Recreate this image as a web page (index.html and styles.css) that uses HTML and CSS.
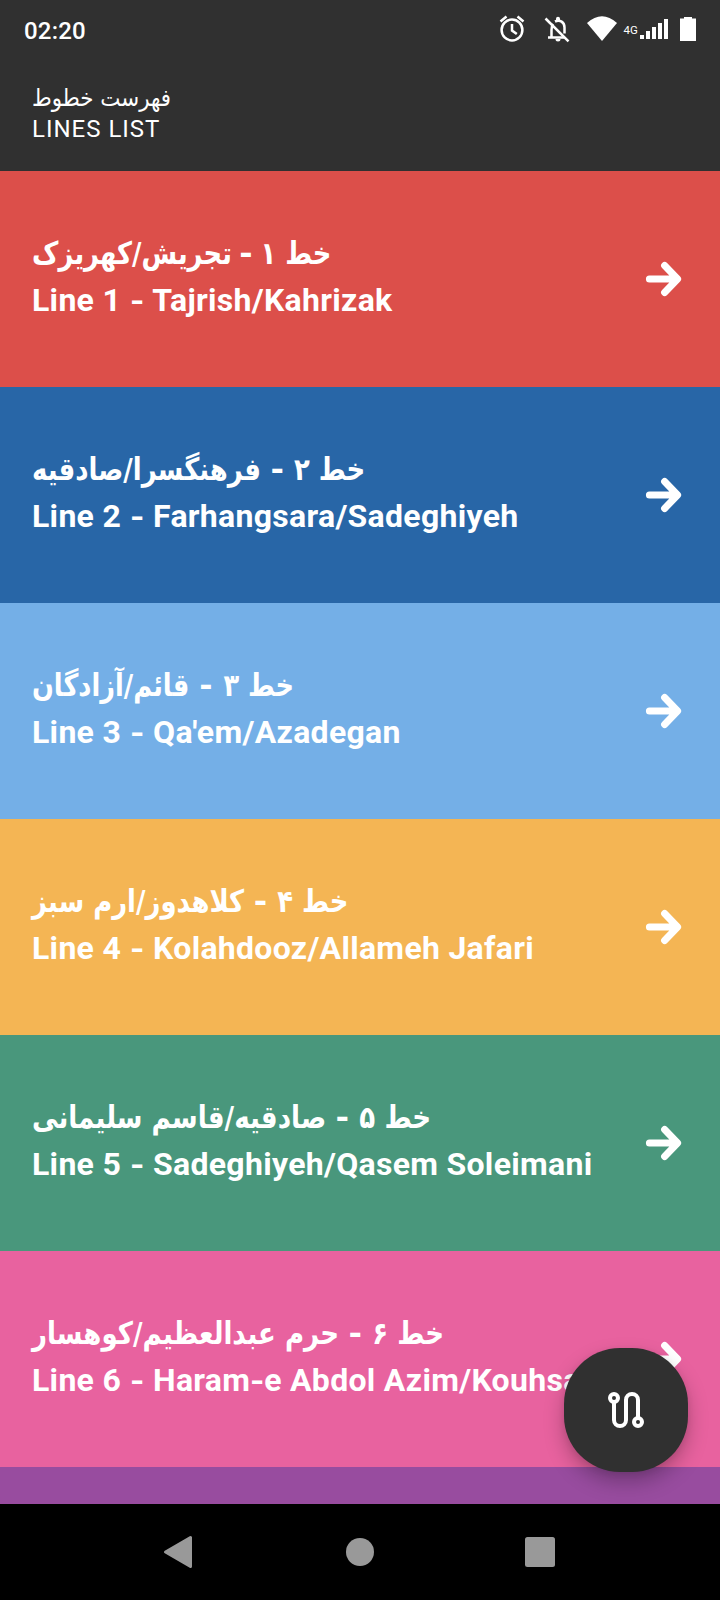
FILE: index.html
```html
<!DOCTYPE html>
<html lang="en">
<head>
<meta charset="utf-8">
<title>Lines List</title>
<link rel="stylesheet" href="styles.css">
</head>
<body>
<svg class="defs" width="0" height="0"><symbol id="arrow" viewBox="0 0 36 36"><path d="M3.4 18H31M18.6 4.5 31.6 18 18.6 31.5" fill="none" stroke="#fff" stroke-width="7" stroke-linecap="round" stroke-linejoin="round"/></symbol></svg>
<div class="screen">
  <header class="header">
    <div class="status">
      <span class="time">02:20</span>
      <svg class="status-icons" viewBox="0 0 240 60">
        <g fill="none" stroke="#fff" stroke-width="2.5">
          <circle cx="32" cy="30" r="10.4"/>
          <path d="M32 24v6.5l4.800 3.600M20.500 21.500l6-5M43.500 21.500l-6-5"/>
          <path d="M71.500 37.500V30c0-2.500.5-4.500 1.500-6M68 37.500h16M75 21.500c5-2.400 9.500.8 9.500 6v6"/>
          <path d="M65.500 18.500 88.500 41.300"/>
        </g>
        <g fill="#fff">
          <path d="M76 20v-1.200a2 2 0 0 1 4 0V20l-2 1zM75.500 39h5a2.500 2.500 0 0 1-5 0z"/>
          <path d="M107 23Q122 9.500 137 23L122 41z"/>
          <path d="M160 35h4v4h-4zM166 31h4v8h-4zM172 27h4v12h-4zM178 23h4v16h-4zM184 19h4v20h-4z"/>
          <path d="M200 18.500h4V17h8v1.500h4V41h-16z"/>
          <text class="network" x="143.500" y="34">4G</text>
        </g>
      </svg>
    </div>
    <div class="title-fa"><span>فهرست خطوط</span></div>
    <div class="title-en">LINES LIST</div>
  </header>
  <main class="lines">
    <a class="line red"><div class="names"><div class="fa"><span class="f1">خط ۱ <i>-</i> تجریش/کهریزک</span></div><div class="en">Line 1 <i>-</i> Tajrish/Kahrizak</div></div><svg class="arrow"><use href="#arrow"/></svg></a>
    <a class="line blue"><div class="names"><div class="fa"><span>خط ۲ <i>-</i> فرهنگسرا/صادقیه</span></div><div class="en">Line 2 <i>-</i> Farhangsara/Sadeghiyeh</div></div><svg class="arrow"><use href="#arrow"/></svg></a>
    <a class="line sky"><div class="names"><div class="fa"><span class="f3">خط ۳ <i>-</i> قائم/آزادگان</span></div><div class="en">Line 3 <i>-</i> Qa'em/Azadegan</div></div><svg class="arrow"><use href="#arrow"/></svg></a>
    <a class="line yellow"><div class="names"><div class="fa"><span>خط ۴ <i>-</i> کلاهدوز/ارم سبز</span></div><div class="en">Line 4 <i>-</i> Kolahdooz/Allameh Jafari</div></div><svg class="arrow"><use href="#arrow"/></svg></a>
    <a class="line green"><div class="names"><div class="fa"><span class="f5">خط ۵ <i>-</i> صادقیه/قاسم سلیمانی</span></div><div class="en">Line 5 <i>-</i> Sadeghiyeh/Qasem Soleimani</div></div><svg class="arrow"><use href="#arrow"/></svg></a>
    <a class="line pink"><div class="names"><div class="fa"><span class="f6">خط ۶ <i>-</i> حرم عبدالعظیم/کوهسار</span></div><div class="en">Line 6 <i>-</i> Haram<i class="tight">-</i>e Abdol Azim/Kouhsar</div></div><svg class="arrow"><use href="#arrow"/></svg></a>
    <a class="line purple"></a>
    <button class="fab" aria-label="Route">
      <svg width="36" height="36" viewBox="0 0 36 36" fill="none" stroke="#fff" stroke-width="4"><circle cx="6" cy="6" r="4"/><circle cx="30" cy="30" r="4"/><path d="M6 10v18a6 6 0 0 0 12 0V8a6 6 0 0 1 12 0v18"/></svg>
    </button>
  </main>
  <nav class="nav">
    <svg viewBox="0 0 36 36"><path d="M3.500 18 28.500 3.500v29z" fill="#999" stroke="#999" stroke-width="3" stroke-linejoin="round"/></svg>
    <svg viewBox="0 0 36 36"><circle cx="18" cy="18" r="14" fill="#999"/></svg>
    <svg viewBox="0 0 36 36"><rect x="3" y="3" width="30" height="30" rx="2.500" fill="#999"/></svg>
  </nav>
</div>
</body>
</html>
```
FILE: styles.css
```css
* { box-sizing: border-box; }
body { margin: 0; font-family: Roboto, "DejaVu Sans", sans-serif; color: #fff; }
.defs { position: absolute; }
.screen { width: 720px; height: 1600px; display: flex; flex-direction: column; overflow: hidden; }
.header { height: 171px; background: #303030; flex: none; }
.status { height: 60px; display: flex; justify-content: space-between; align-items: center; padding-left: 24px; }
.time { font-size: 24px; font-weight: 500; line-height: 28px; padding-top: 2px; letter-spacing: 0.2px; }
.status-icons { width: 240px; height: 60px; }
.network { font: 400 11.5px Roboto, sans-serif; }
.title-fa { height: 52px; padding: 22px 0 0 32px; font: 24px/32px "DejaVu Sans", sans-serif; white-space: nowrap; }
.title-fa span, .fa span { display: inline-block; direction: rtl; transform-origin: left; }
.title-fa span { transform: scaleX(0.89); }
.title-en { padding: 2px 0 0 32px; font-size: 24px; line-height: 30px; letter-spacing: 1px; }
.lines { flex: 1; min-height: 0; overflow: hidden; position: relative; }
.line { height: 216px; display: flex; align-items: center; justify-content: space-between; padding: 0 37px 0 32px; }
.names { width: 560px; height: 102px; white-space: nowrap; }
.fa { height: 48px; font: bold 31px/50px "DejaVu Sans", sans-serif; }
.fa span { transform: scaleX(0.836); }
.fa .f1 { transform: scaleX(0.831); }
.fa .f3 { transform: scaleX(0.826); }
.fa .f5 { transform: scaleX(0.842); }
.fa .f6 { transform: scaleX(0.841); }
.en { height: 48px; font-size: 32px; line-height: 48px; font-weight: 700; letter-spacing: 0.3px; }
i { display: inline-block; font-style: normal; transform: scaleX(1.25); }
.fa i { margin: 0 3px 0 2px; }
.fa .f1 i { margin: 0; }
.fa .f3 i { margin: 0 4px 0 3px; }
.en i { margin: 0 1px 0 1.5px; transform: translateY(1px) scaleX(1.15); }
.en .tight { margin: 0 0.5px; }
.arrow { width: 38px; height: 36px; flex: none; }
.red { background: #dc4f4a; }
.blue { background: #2866a7; }
.sky { background: #74afe7; }
.yellow { background: #f4b554; }
.green { background: #49977c; }
.pink { background: #e8629f; }
.purple { background: #984c9f; }
.fab { position: absolute; right: 32px; bottom: 32px; width: 124px; height: 124px; border: 0; border-radius: 56px; background: #303030; display: flex; align-items: center; justify-content: center; box-shadow: 0 10px 20px rgba(0,0,0,.25), 0 2px 6px rgba(0,0,0,.08); }
.nav { height: 96px; flex: none; background: #000; display: flex; justify-content: center; align-items: center; gap: 144px; }
.nav svg { width: 36px; height: 36px; }
```
